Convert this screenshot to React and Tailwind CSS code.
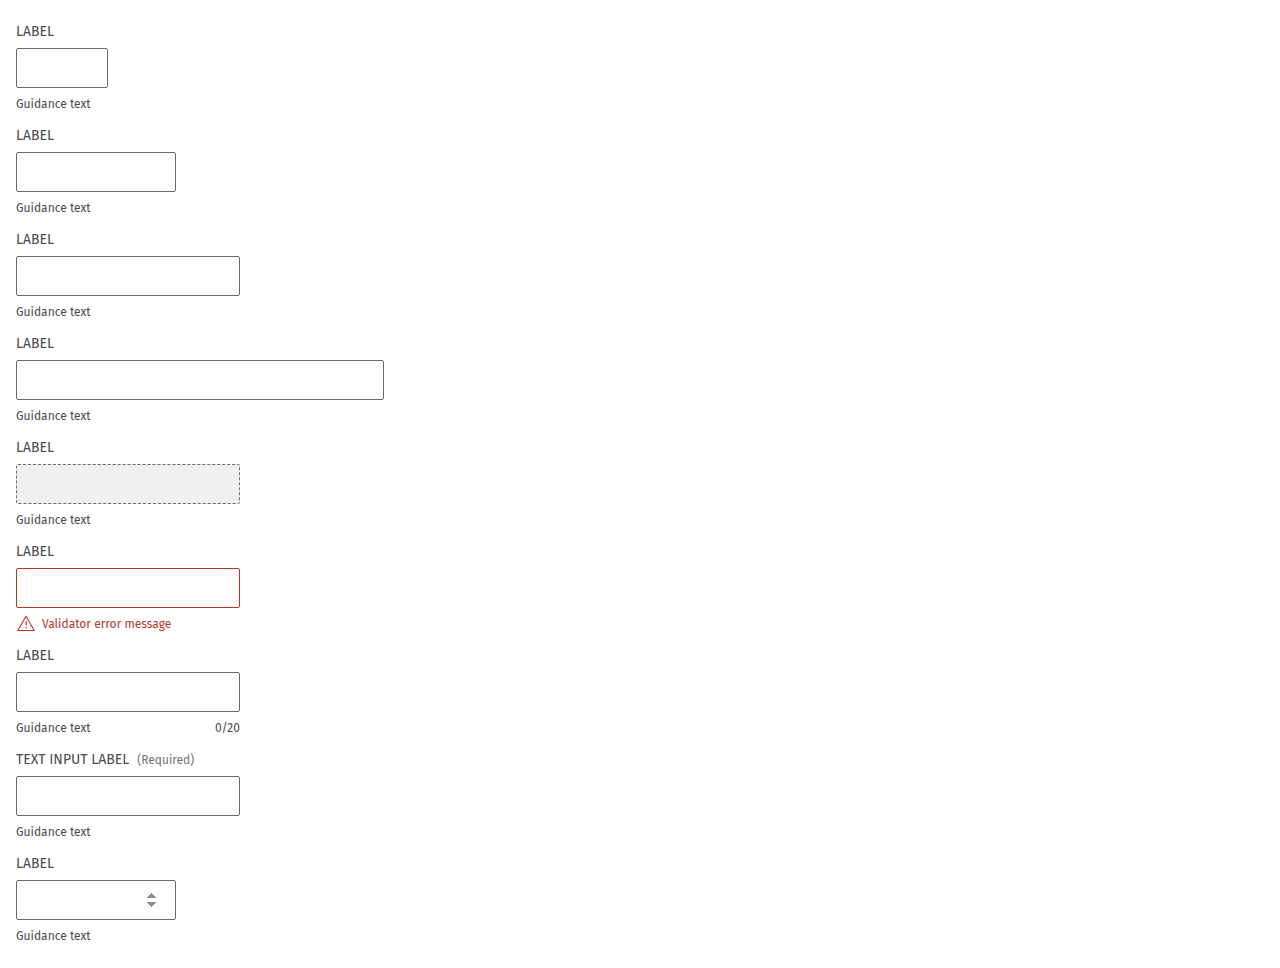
import { useState } from "react";
import { clsx } from "clsx";

const widths = {
  xs: "w-23",
  sm: "w-40",
  md: "w-56",
  lg: "w-92",
};

const fields = [
  { id: "field-extra-small", size: "xs" },
  { id: "field-small", size: "sm" },
  { id: "field-medium", size: "md" },
  { id: "field-large", size: "lg" },
  { id: "field-disabled", size: "md", disabled: true },
  { id: "field-invalid", size: "md", error: "Validator error message" },
  { id: "field-counted", size: "md", maxLength: 20 },
  { id: "field-required", size: "md", label: "TEXT INPUT LABEL", required: true },
  { id: "field-number", size: "sm", type: "number" },
];

function WarningIcon() {
  return (
    <svg
      className="h-5 w-5 shrink-0"
      viewBox="0 0 20 20"
      fill="none"
      stroke="currentColor"
      strokeLinejoin="round"
      aria-hidden="true"
    >
      <path d="M10 2.2 18.2 16.5H1.8Z" strokeWidth="1.1" />
      <path d="M10.2 7.5v4" strokeWidth="1.2" />
      <path d="M10.2 13v1.2" strokeWidth="1.2" />
    </svg>
  );
}

function Field({ id, size, label = "LABEL", type = "text", disabled, error, maxLength, required }) {
  const [value, setValue] = useState("");

  return (
    <div className="flex flex-col items-start gap-2">
      <div className="flex h-4 items-center gap-2">
        <label htmlFor={id} className="text-sm leading-4">
          {label}
        </label>
        {required && <span className="text-xs leading-4 text-[#737373]">(Required)</span>}
      </div>
      <input
        id={id}
        type={type}
        value={value}
        onChange={(event) => setValue(event.target.value)}
        disabled={disabled}
        required={required}
        maxLength={maxLength}
        aria-invalid={Boolean(error)}
        aria-describedby={`${id}-hint`}
        className={clsx(
          "h-10 max-w-full rounded-xs border px-4 text-base outline-none focus:ring-1 focus:ring-[#6a6a6a]",
          "[&::-webkit-inner-spin-button]:opacity-100",
          widths[size],
          error ? "border-[#b93529]" : "border-[#6a6a6a]",
          disabled ? "border-dashed bg-[#f0f0f0]" : "bg-white",
        )}
      />
      <div className={clsx("flex h-4 max-w-full items-center justify-between text-xs leading-4", maxLength && widths[size])}>
        <span
          id={`${id}-hint`}
          className={clsx("flex items-center gap-1.5 whitespace-nowrap", error && "text-[#b93529]")}
        >
          {error && <WarningIcon />}
          {error || "Guidance text"}
        </span>
        {maxLength && (
          <span>
            {value.length}/{maxLength}
          </span>
        )}
      </div>
    </div>
  );
}

export default function App() {
  return (
    <main className="flex flex-col gap-4 bg-white px-4 py-6 font-['Fira_Sans','Noto_Sans',sans-serif] text-[#4a4a4a]">
      {fields.map((field) => (
        <Field key={field.id} {...field} />
      ))}
    </main>
  );
}
